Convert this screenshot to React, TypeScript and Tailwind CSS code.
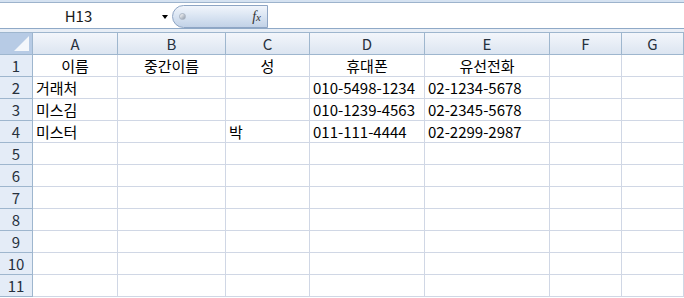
import React from 'react';

const cols = [
  { key: 'A', w: 'w-[85px]' },
  { key: 'B', w: 'w-[108px]' },
  { key: 'C', w: 'w-[84px]' },
  { key: 'D', w: 'w-[115px]' },
  { key: 'E', w: 'w-[125px]' },
  { key: 'F', w: 'w-[72px]' },
  { key: 'G', w: 'flex-1' },
];

type Cell = { text: string; center?: boolean };

const data: Cell[][] = [
  [{ text: '이름', center: true }, { text: '중간이름', center: true }, { text: '성', center: true }, { text: '휴대폰', center: true }, { text: '유선전화', center: true }],
  [{ text: '거래처' }, { text: '' }, { text: '' }, { text: '010-5498-1234' }, { text: '02-1234-5678' }],
  [{ text: '미스김' }, { text: '' }, { text: '' }, { text: '010-1239-4563' }, { text: '02-2345-5678' }],
  [{ text: '미스터' }, { text: '' }, { text: '박' }, { text: '011-111-4444' }, { text: '02-2299-2987' }],
];

const font = "font-['Noto_Sans_CJK_KR','Noto_Sans',sans-serif]";

export default function App() {
  const rows = Array.from({ length: 11 }, (_, i) => i + 1);

  return (
    <div className={`w-[684px] h-[298px] overflow-hidden bg-white ${font}`}>
      {/* formula bar */}
      <div className="h-[2px] bg-[#d5e2f1]" />
      <div className="h-[1px] bg-[#9db3cc]" />
      <div className="flex h-[25px] bg-white">
        <div className="relative w-[172px] flex items-center">
          <span className="w-[157px] text-center text-[15px] leading-none text-[#1a1a1a]">H13</span>
          <span className="absolute left-[162px] top-[12px] w-0 h-0 border-l-[3px] border-r-[3px] border-t-[4px] border-l-transparent border-r-transparent border-t-black" />
        </div>
        <div className="mt-[2px] w-[96px] h-[23px] rounded-l-full border border-[#8ea5c4] bg-gradient-to-b from-[#f1f5fb] via-[#d9e4f2] to-[#c2d2e7] flex items-center justify-between pl-[6px] pr-[6px]">
          <span className="w-[7px] h-[7px] rounded-full bg-gradient-to-br from-[#ffffff] to-[#8e99a8] border border-[#aab4c2]" />
          <span className="font-['Liberation_Serif',serif] italic text-[14px] text-[#333] leading-none">
            f<span className="text-[11px]">x</span>
          </span>
        </div>
        <div className="flex-1 bg-white" />
      </div>
      <div className="h-[1px] bg-[#8fa9c7]" />
      <div className="h-[3px] bg-[#e8eef6]" />
      <div className="h-[1px] bg-[#9eb6ce]" />

      {/* column headers */}
      <div className="flex h-[22px] border-b border-[#9eb6ce]">
        <div className="w-[33px] border-r border-[#9eb6ce] bg-[#b7cbe5] relative overflow-hidden">
          <span className="absolute right-[3px] bottom-[3px] w-0 h-0 border-b-[15px] border-l-[15px] border-b-[#f4f7fb] border-l-transparent" />
        </div>
        {cols.map((c) => (
          <div
            key={c.key}
            className={`${c.w} border-r border-[#9eb6ce] bg-gradient-to-b from-[#f3f6fb] to-[#dce5f1] flex items-center justify-center text-[15px] leading-none text-[#27313d]`}
          >
            {c.key}
          </div>
        ))}
      </div>

      {/* rows */}
      {rows.map((r) => (
        <div key={r} className="flex h-[22px]">
          <div className="w-[33px] border-r border-b border-r-[#9eb6ce] border-b-[#9eb6ce] bg-[#e4ecf7] flex items-center justify-center text-[15px] leading-none text-[#27313d]">
            {r}
          </div>
          {cols.map((c, ci) => {
            const cell = data[r - 1]?.[ci];
            return (
              <div
                key={c.key}
                className={`${c.w} border-r border-b border-[#d0d7e5] flex items-center px-[3px] text-[15px] leading-none text-black whitespace-nowrap ${cell?.center ? 'justify-center' : ''}`}
              >
                {cell?.text}
              </div>
            );
          })}
        </div>
      ))}
    </div>
  );
}
